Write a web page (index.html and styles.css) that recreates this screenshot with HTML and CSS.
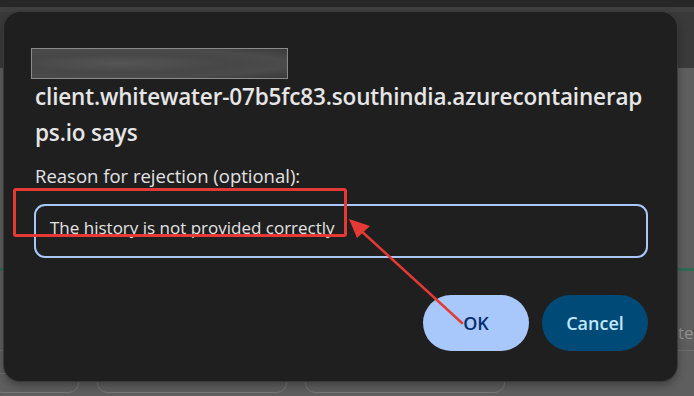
FILE: index.html
```html
<!DOCTYPE html>
<html>
<head>
<meta charset="utf-8">
<link rel="stylesheet" href="styles.css">
</head>
<body>
<div class="page">
  <div class="topbar"></div>
  <div class="header"></div>
  <div class="content">
    <div class="green-rule"></div>
    <div class="side-text">te</div>
    <div class="rule"></div>
    <div class="cards">
      <div class="card c1"></div>
      <div class="card c2"></div>
      <div class="card c3"></div>
    </div>
  </div>
</div>

<div class="dialog">
  <div class="blur-box"></div>
  <h1 class="title">client.whitewater-07b5fc83.southindia.azurecontainerapps.io says</h1>
  <label class="label" for="reason">Reason for rejection (optional):</label>
  <div class="input" id="reason">The history is not provided correctly</div>
  <div class="actions">
    <button class="btn ok">OK</button>
    <button class="btn cancel">Cancel</button>
  </div>
</div>

<div class="annot-box"></div>
<svg class="annot-arrow" width="694" height="396" viewBox="0 0 694 396">
  <line x1="462" y1="323" x2="358" y2="228" stroke="#e53935" stroke-width="2.5" stroke-linecap="round"/>
  <polygon points="349,219 370,226 357,238" fill="#e53935"/>
</svg>
</body>
</html>
```

FILE: styles.css
```css
* { box-sizing: border-box; }
html, body { margin: 0; padding: 0; }
body {
  width: 694px;
  height: 396px;
  overflow: hidden;
  background: #5e5e5e;
  font-family: "Open Sans", "Noto Sans", sans-serif;
}
.page { display: flex; flex-direction: column; height: 396px; }
.topbar { height: 7px; background: #272727; }
.header { height: 61px; background: #3a3a3a; border-top: 5px solid #404040; }
.content {
  flex: 1;
  background: #5e5e5e;
  display: flex;
  flex-direction: column;
  padding-top: 200px;
}
.green-rule { height: 3px; background: #2f6b52; }
.side-text {
  align-self: flex-end;
  margin-top: 52px;
  width: 16px;
  color: #8e8e8e;
  font-size: 17px;
  line-height: 20px;
  white-space: nowrap;
  overflow: hidden;
}
.rule { height: 1px; background: #6c6c6c; margin-top: 7px; }
.cards { display: flex; gap: 18px; margin-top: 22px; }
.card {
  height: 20px;
  border: 1px solid #777;
  border-radius: 10px;
  background: #5e5e5e;
}
.c1 { width: 87px; margin-left: -8px; }
.c2 { width: 190px; }
.c3 { width: 200px; }

.dialog {
  position: absolute;
  left: 4px;
  top: 12px;
  width: 673px;
  height: 369px;
  background: #1f1f1f;
  border-radius: 16px;
  box-shadow: 0 0 0 1px #3a3a3a, 0 4px 10px rgba(0,0,0,0.35);
  padding: 36px 29px 0 30px;
  display: flex;
  flex-direction: column;
}
.blur-box {
  width: 257px;
  height: 31px;
  margin-left: -3px;
  flex-shrink: 0;
  border: 1px solid #8a8a8a;
  background: radial-gradient(ellipse at 35% 50%, #555 0%, #474747 45%, #4b4b4b 70%, #3a3a3a 100%);
}
.title {
  margin: 0 0 0 1px;
  font-size: 22.5px;
  font-weight: 600;
  line-height: 36px;
  color: #e6e6e6;
  word-break: break-all;
  letter-spacing: -0.15px;
}
.label {
  margin-top: 14px;
  margin-left: 1px;
  font-size: 18.5px;
  line-height: 22px;
  color: #e3e3e3;
}
.input {
  margin-top: 17px;
  height: 54px;
  flex-shrink: 0;
  border: 2px solid #a8c7fa;
  border-radius: 11px;
  padding: 11px 14px 0;
  font-size: 17px;
  line-height: 22px;
  color: #e3e3e3;
}
.actions {
  display: flex;
  justify-content: flex-end;
  gap: 13px;
  margin-top: 37px;
}
.btn {
  height: 56px;
  width: 106px;
  border: none;
  border-radius: 28px;
  font-family: "Open Sans", "Noto Sans", sans-serif;
  font-size: 18px;
  font-weight: 600;
}
.ok { background: #a8c7fa; color: #062e6f; }
.cancel { background: #004a77; color: #c2e7ff; }

.annot-box {
  position: absolute;
  left: 13px;
  top: 188px;
  width: 334px;
  height: 49px;
  border: 3px solid #e53935;
  border-radius: 3px;
}
.annot-arrow { position: absolute; left: 0; top: 0; }
```
